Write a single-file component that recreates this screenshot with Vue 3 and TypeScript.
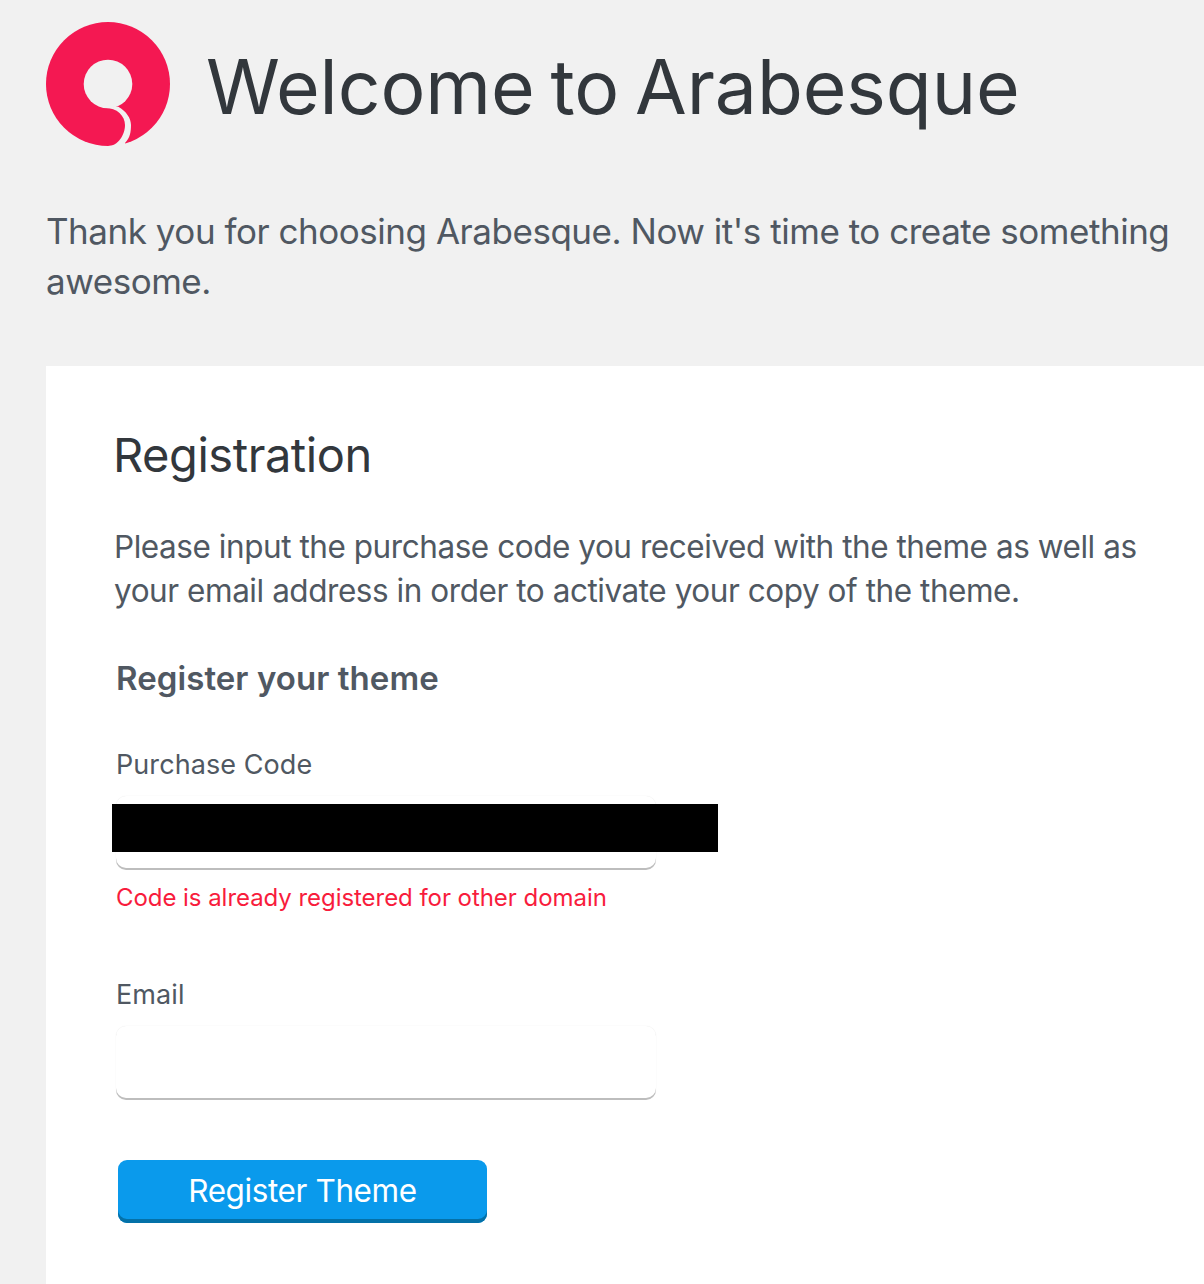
<script setup lang="ts">
const title = 'Welcome to Arabesque'
</script>

<template>
  <div class="page">
    <header class="head">
      <svg class="logo" width="124" height="124" viewBox="46 22 124 124" aria-hidden="true">
        <circle cx="108" cy="84" r="62" fill="#f41852" />
        <circle cx="108" cy="84" r="24.3" fill="#f1f1f1" />
        <path d="M104 107.8C117 107.5 125 116 125 125C125 135 118 146 108 146L108 148L125 148L125 143C130 138 131 132 131 125C131 118 126 111 118.3 106.7Z" fill="#f1f1f1" />
      </svg>
      <h1 class="title">{{ title }}</h1>
    </header>
    <p class="intro">Thank you for choosing Arabesque. Now it's time to create something awesome.</p>
    <main class="card">
      <h2 class="card-title">Registration</h2>
      <p class="lead">Please input the purchase code you received with the theme as well as your email address in order to activate your copy of the theme.</p>
      <form class="form" @submit.prevent>
        <h3 class="form-title">Register your theme</h3>
        <label class="label" for="code">Purchase Code</label>
        <div class="field-wrap">
          <input id="code" class="input" type="text" />
          <div class="redact"></div>
        </div>
        <p class="error">Code is already registered for other domain</p>
        <label class="label email" for="email">Email</label>
        <input id="email" class="input" type="email" />
        <button class="btn" type="submit">Register Theme</button>
      </form>
    </main>
  </div>
</template>

<style>
html, body { margin: 0; background: #f1f1f1; overflow: hidden; }
</style>

<style scoped>
.page {
  width: 1204px;
  height: 1284px;
  overflow: hidden;
  background: #f1f1f1;
  box-sizing: border-box;
  padding: 22px 0 0 46px;
  font-family: Inter, "Noto Sans", sans-serif;
  color: #505862;
}
.head { display: flex; align-items: center; gap: 36px; height: 124px; }
.logo { display: block; flex: none; }
.title { margin: 6px 0 0; font-size: 75px; font-weight: 400; line-height: 90px; color: #32373c; letter-spacing: -0.1px; word-spacing: -5px; white-space: nowrap; }
.intro { margin: 60px 0 0; width: 1130px; font-size: 35px; line-height: 50px; letter-spacing: -0.47px; }
.card { margin-top: 60px; background: #fff; box-sizing: border-box; height: 920px; padding: 59px 0 0 68px; }
.card-title { margin: 0 0 0 -1px; font-size: 47px; line-height: 60px; font-weight: 400; color: #32373c; letter-spacing: -0.45px; }
.lead { margin: 40px 0 0; width: 1040px; font-size: 31.5px; line-height: 44px; letter-spacing: -0.45px; }
.form { padding-left: 2px; }
.form-title { margin: 43px 0 0; font-size: 33px; line-height: 44px; font-weight: 600; letter-spacing: 0.07px; }
.label { display: block; margin-top: 47px; font-size: 27px; line-height: 36px; letter-spacing: 0.08px; }
.email { margin-top: 61px; }
.field-wrap { position: relative; width: 540px; }
.input {
  display: block;
  box-sizing: border-box;
  width: 540px;
  height: 72px;
  margin-top: 13px;
  border: 0;
  border-radius: 10px;
  background: #fff;
  box-shadow: 0 2px 0 #bdbdbd, 0 0 1px #e2e2e2;
  outline: none;
}
.redact { position: absolute; left: -4px; top: 8px; width: 606px; height: 48px; background: #000; }
.error { margin: 12px 0 0; font-size: 24px; line-height: 36px; color: #f81c3c; letter-spacing: -0.05px; }
.btn {
  display: block;
  box-sizing: border-box;
  width: 369px;
  height: 63px;
  margin: 62px 0 0 2px;
  border: 0;
  border-radius: 9px;
  background: #0a9aec;
  box-shadow: inset 0 -4px 0 #0471a8;
  color: #fff;
  font-family: inherit;
  font-size: 31.5px;
  letter-spacing: -0.4px;
  padding: 0 0 3px;
}
</style>
